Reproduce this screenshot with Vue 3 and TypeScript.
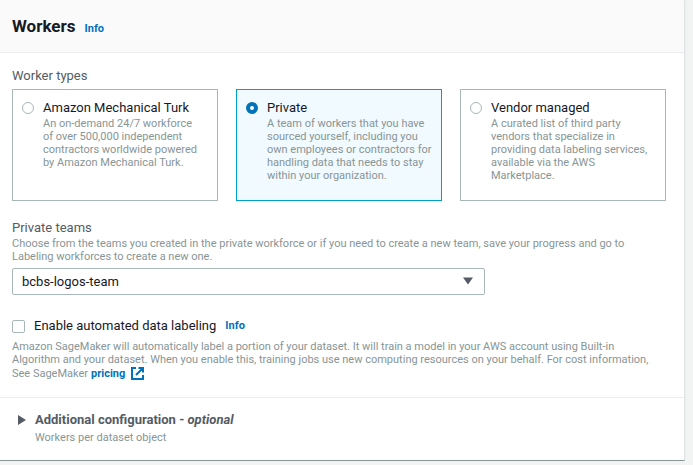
<script setup lang="ts">
import { ref } from 'vue'

interface WorkerType {
  id: string
  title: string
  lines: string[]
}

const workerTypes: WorkerType[] = [
  {
    id: 'turk',
    title: 'Amazon Mechanical Turk',
    lines: [
      'An on-demand 24/7 workforce',
      'of over 500,000 independent',
      'contractors worldwide powered',
      'by Amazon Mechanical Turk.',
    ],
  },
  {
    id: 'private',
    title: 'Private',
    lines: [
      'A team of workers that you have',
      'sourced yourself, including you',
      'own employees or contractors for',
      'handling data that needs to stay',
      'within your organization.',
    ],
  },
  {
    id: 'vendor',
    title: 'Vendor managed',
    lines: [
      'A curated list of third party',
      'vendors that specialize in',
      'providing data labeling services,',
      'available via the AWS',
      'Marketplace.',
    ],
  },
]

const selectedType = ref('private')
const team = ref('bcbs-logos-team')
const autoLabel = ref(false)
const expanded = ref(false)
</script>

<template>
  <main class="panel">
    <header class="panel-header">
      <h2>Workers</h2>
      <a href="#" class="info">Info</a>
    </header>

    <div class="panel-body">
      <fieldset class="types">
        <legend class="field-label">Worker types</legend>
        <div class="cards">
          <label
            v-for="type in workerTypes"
            :key="type.id"
            class="card"
            :class="{ selected: selectedType === type.id }"
          >
            <input v-model="selectedType" type="radio" name="worker-type" :value="type.id" />
            <span class="card-text">
              <span class="card-title">{{ type.title }}</span>
              <span class="hint">
                <span v-for="line in type.lines" :key="line" class="line">{{ line }}</span>
              </span>
            </span>
          </label>
        </div>
      </fieldset>

      <div class="teams">
        <label for="team" class="field-label">Private teams</label>
        <p class="hint">
          <span class="line">Choose from the teams you created in the private workforce or if you need to create a new team, save your progress and go to</span>
          <span class="line">Labeling workforces to create a new one.</span>
        </p>
        <div class="select-wrap">
          <select id="team" v-model="team">
            <option>bcbs-logos-team</option>
          </select>
          <svg class="caret" width="10" height="8" viewBox="0 0 10 8" aria-hidden="true">
            <path d="M0 0.5H10L5 7.5Z" fill="#545b64" />
          </svg>
        </div>
      </div>

      <div class="auto">
        <div class="check-row">
          <input id="auto" v-model="autoLabel" type="checkbox" />
          <label for="auto">Enable automated data labeling</label>
          <a href="#" class="info">Info</a>
        </div>
        <p class="hint">
          <span class="line">Amazon SageMaker will automatically label a portion of your dataset. It will train a model in your AWS account using Built-in</span>
          <span class="line">Algorithm and your dataset. When you enable this, training jobs use new computing resources on your behalf. For cost information,</span>
          <span class="pricing-line">
            <span>See SageMaker</span>
            <a href="#" class="pricing">
              <span>pricing</span>
              <svg width="13" height="13" viewBox="0 0 13 13" fill="none" stroke="#0073bb" stroke-width="2" aria-hidden="true">
                <path d="M5 1H1V12H12V8M7.500 1H12V5.500M12 1L5 8" />
              </svg>
            </a>
          </span>
        </p>
      </div>
    </div>

    <footer class="additional">
      <button type="button" :aria-expanded="expanded" @click="expanded = !expanded">
        <svg width="8" height="10" viewBox="0 0 8 10" aria-hidden="true">
          <path d="M0 0L8 5L0 10Z" fill="#545b64" />
        </svg>
        <span>Additional configuration - <em>optional</em></span>
      </button>
      <p class="hint">Workers per dataset object</p>
    </footer>
  </main>
</template>

<style>
body {
  background: #f2f3f3;
}
</style>

<style scoped>
.panel {
  margin-right: 8px;
  background: #fff;
  border-right: 1px solid #dfe3e4;
  border-bottom: 1px solid #879596;
  box-shadow: 0 1px 1px #d5dbdb;
  color: #16191f;
  font-family: Roboto, "Noto Sans", sans-serif;
  font-size: 13px;
  line-height: 18px;
}

.panel-header {
  display: flex;
  align-items: baseline;
  gap: 9px;
  padding: 14px 12px;
  background: #fafafa;
  border-bottom: 1px solid #eaeded;
}

h2 {
  margin: 0;
  font-size: 17px;
  line-height: 24px;
  font-weight: 700;
}

a {
  color: #0073bb;
  font-weight: 700;
  text-decoration: none;
}

.info {
  font-size: 11px;
}

.panel-body {
  padding: 14px 18px 16px 12px;
}

.types {
  margin: 0;
  padding: 0;
  border: 0;
  min-width: 0;
}

.field-label {
  display: block;
  padding: 0;
  color: #545b64;
}

.cards {
  display: grid;
  grid-template-columns: repeat(3, minmax(0, 1fr));
  gap: 18px;
  padding-top: 4px;
}

.card {
  display: flex;
  gap: 9px;
  padding: 9px 9px 18px;
  border: 1px solid #aab7b8;
}

.card.selected {
  background: #f1faff;
  border-color: #00a1c9;
}

.card-title {
  display: block;
}

.hint {
  display: block;
  margin: 0;
  color: #879596;
  font-size: 11px;
  line-height: 13px;
}

.line {
  display: block;
  white-space: nowrap;
}

input {
  appearance: none;
  flex: none;
  box-sizing: border-box;
  background: #fff;
  border: 1px solid #aab7b8;
}

input[type="radio"] {
  width: 12px;
  height: 12px;
  margin: 3px 0 0;
  border-radius: 50%;
}

input[type="radio"]:checked {
  border: 4px solid #0073bb;
}

input[type="checkbox"] {
  width: 13px;
  height: 13px;
  margin: 0;
  border-radius: 2px;
}

input[type="checkbox"]:checked {
  background: #0073bb;
}

.teams {
  padding-top: 18px;
}

.select-wrap {
  position: relative;
  width: 473px;
  max-width: 100%;
  margin-top: 5px;
}

select {
  display: block;
  appearance: none;
  width: 100%;
  height: 27px;
  padding: 0 9px;
  border: 1px solid #aab7b8;
  border-radius: 2px;
  background: #fff;
  color: #16191f;
  font: inherit;
}

.caret {
  position: absolute;
  top: 9px;
  right: 12px;
  pointer-events: none;
}

.auto {
  padding-top: 22px;
}

.check-row {
  display: flex;
  align-items: center;
  gap: 9px;
  padding-bottom: 5px;
}

.pricing-line {
  display: flex;
  align-items: center;
  gap: 3px;
  line-height: 15px;
}

.pricing {
  display: flex;
  align-items: center;
  gap: 6px;
}

.additional {
  padding: 13px 18px 16px;
  border-top: 1px solid #eaeded;
}

.additional button {
  display: flex;
  align-items: center;
  gap: 9px;
  padding: 0;
  border: 0;
  background: none;
  color: #545b64;
  font: inherit;
  font-weight: 700;
}

.additional .hint {
  padding: 2px 0 0 17px;
}
</style>
